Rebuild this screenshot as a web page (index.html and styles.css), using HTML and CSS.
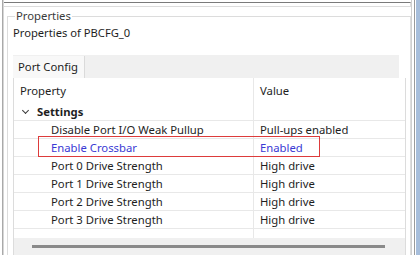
FILE: index.html
```html
<!DOCTYPE html>
<html lang="en">
<head>
    <meta charset="UTF-8">
    <title>Properties</title>
    <link rel="stylesheet" href="styles.css">
</head>
<body>
    <div class="window">
        <div class="view">
            <div class="topbar"></div>
            <fieldset class="group">
                <legend>Properties</legend>
                <p class="subtitle">Properties of PBCFG_0</p>

                <div class="tabs">
                    <span class="tab">Port Config</span>
                </div>

                <div class="grid-wrap">
                    <table class="grid">
                        <tr class="head">
                            <td class="col-prop">Property</td>
                            <td class="col-value">Value</td>
                        </tr>
                        <tr class="category">
                            <td><span class="chevron"></span>Settings</td>
                            <td></td>
                        </tr>
                        <tr>
                            <td class="child">Disable Port I/O Weak Pullup</td>
                            <td>Pull-ups enabled</td>
                        </tr>
                        <tr class="changed">
                            <td class="child">Enable Crossbar</td>
                            <td>Enabled</td>
                        </tr>
                        <tr>
                            <td class="child">Port 0 Drive Strength</td>
                            <td>High drive</td>
                        </tr>
                        <tr>
                            <td class="child">Port 1 Drive Strength</td>
                            <td>High drive</td>
                        </tr>
                        <tr>
                            <td class="child">Port 2 Drive Strength</td>
                            <td>High drive</td>
                        </tr>
                        <tr>
                            <td class="child">Port 3 Drive Strength</td>
                            <td>High drive</td>
                        </tr>
                        <tr class="filler">
                            <td></td>
                            <td></td>
                        </tr>
                    </table>
                    <!-- annotation box -->
                    <div class="highlight"></div>
                    <div class="hscroll"><span class="thumb"></span></div>
                </div>
            </fieldset>
        </div>
        <div class="edge"></div>
    </div>
</body>
</html>
```

FILE: styles.css
```css
html, body {
    margin: 0;
    padding: 0;
}
body {
    width: 420px;
    height: 255px;
    overflow: hidden;
    background: #ffffff;
    font-family: "Segoe UI", "Noto Sans", "Open Sans", sans-serif;
    font-size: 11.3px;
    color: #1e1e1e;
}
.window {
    display: flex;
    height: 255px;
}
.view {
    flex: 1;
    margin-left: 2px;
    border-left: 1px solid #a9a9a9;
    padding-left: 1px;
    box-shadow: inset 1px 0 0 #d6d6d6;
    display: flex;
    flex-direction: column;
    min-width: 0;
}
.topbar {
    margin-top: 2px;
    height: 4px;
    border-top: 1px solid #7a7a7a;
    border-bottom: 1px solid #dcdcdc;
    border-right: 1px solid #dcdcdc;
}
.group {
    flex: 1;
    margin: 1px 0 0 3px;
    padding: 0 4px 0 5px;
    border: 1px solid #dcdcdc;
    border-bottom: none;
    min-width: 0;
}
.group legend {
    padding: 0 1px;
    margin-left: 2px;
    line-height: 16px;
    color: #3b3b3b;
}
.subtitle {
    margin: 1px 0 0 0;
    line-height: 16px;
    height: 16px;
    font-size: 11.2px;
}
.tabs {
    margin-top: 14px;
    height: 23px;
    background: #f0f0f0;
    display: flex;
    margin-right: 7px;
}
.tab {
    display: inline-block;
    margin-top: 1px;
    padding: 0 6px 0 5px;
    line-height: 22px;
    background: #f8f8f8;
    border-right: 1px solid #dadada;
}
.grid-wrap {
    position: relative;
    border-left: 1px solid #dcdcdc;
    border-right: 1px solid #dcdcdc;
}
.grid {
    width: 100%;
    border-collapse: collapse;
    table-layout: fixed;
}
.grid td {
    height: 17px;
    padding: 0 0 0 6px;
    border-bottom: 1px solid #e8e8e8;
    white-space: nowrap;
    line-height: 17px;
}
.grid td:first-child {
    width: 233px;
    border-right: 1px solid #e8e8e8;
}
.grid .head td {
    height: 24px;
    border-bottom: none;
    vertical-align: top;
    line-height: 25px;
}
.category td {
    font-weight: bold;
}
.chevron {
    display: inline-block;
    width: 4px;
    height: 4px;
    border-right: 1.3px solid #3a3a3a;
    border-bottom: 1.3px solid #3a3a3a;
    transform: rotate(45deg);
    margin: 0 9px 3px 3px;
}
.grid td.child {
    padding-left: 37px;
}
.changed td {
    color: #3a3ad4;
}
.filler td {
    height: 9px;
    border-bottom: none;
}
.highlight {
    position: absolute;
    left: 24px;
    top: 58px;
    width: 280px;
    height: 19px;
    border: 1px solid #dd3b3b;
}
.hscroll {
    height: 17px;
    background: #f0f0f0;
    display: flex;
    align-items: center;
}
.thumb {
    display: block;
    margin-left: 18px;
    width: 353px;
    height: 3px;
    background: #8a8a8a;
}
.edge {
    width: 8px;
    border-left: 1px solid #d0d0d0;
    display: flex;
}
.edge::before {
    content: "";
    width: 1px;
    margin-left: 2px;
    background: #9a9a9a;
}
.edge::after {
    content: "";
    flex: 1;
    margin-left: 1px;
    background: #a7bedb;
}
```
